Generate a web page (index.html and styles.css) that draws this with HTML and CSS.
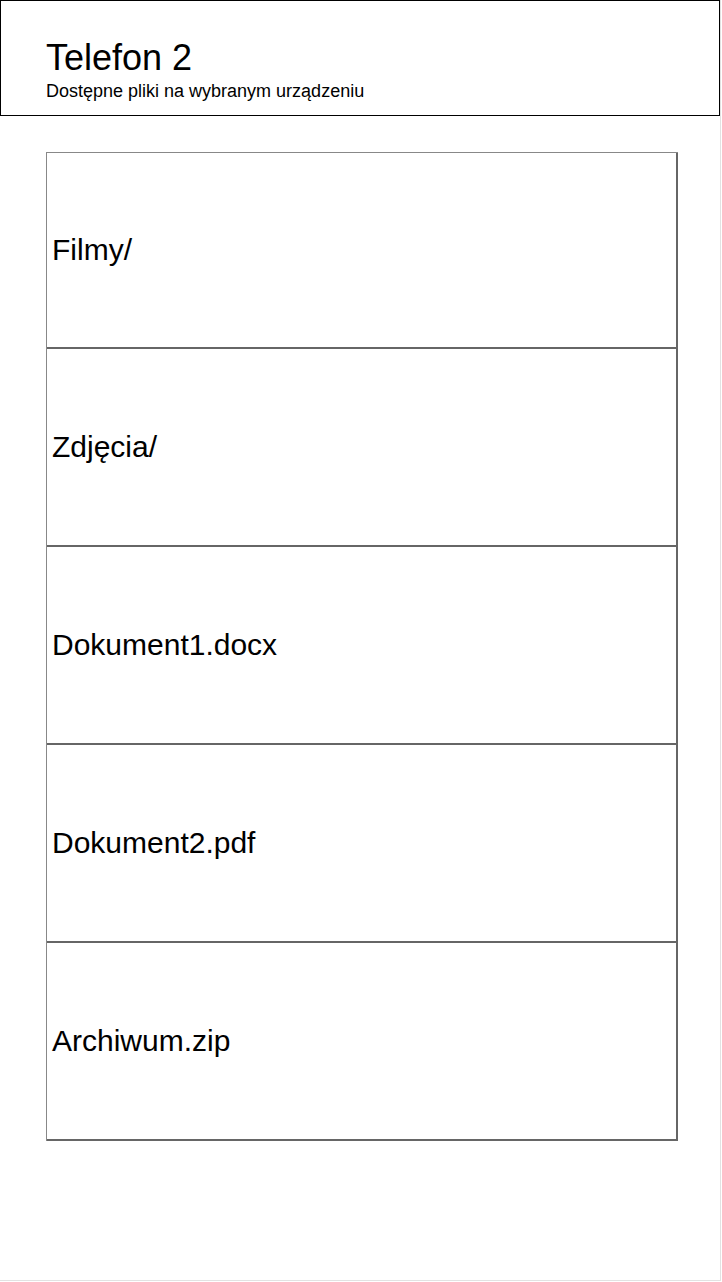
FILE: index.html
```html
<!DOCTYPE html>
<html lang="pl">
<head>
<meta charset="utf-8">
<title>Telefon 2</title>
<link rel="stylesheet" href="styles.css">
</head>
<body>
<div class="page">
  <header class="header">
    <h1 class="title">Telefon 2</h1>
    <p class="subtitle">Dostępne pliki na wybranym urządzeniu</p>
  </header>
  <ul class="files">
    <li class="file">Filmy/</li>
    <li class="file">Zdjęcia/</li>
    <li class="file">Dokument1.docx</li>
    <li class="file">Dokument2.pdf</li>
    <li class="file">Archiwum.zip</li>
  </ul>
</div>
</body>
</html>
```
FILE: styles.css
```css
html, body {
  margin: 0;
  padding: 0;
  background: #fff;
}
body {
  font-family: "Liberation Sans", Arial, sans-serif;
  color: #000;
}
.page {
  width: 720px;
  height: 1280px;
  border-right: 1px solid #e2e2e2;
  border-bottom: 1px solid #e2e2e2;
  box-sizing: content-box;
}
.header {
  border: 1px solid #000;
  height: 76px;
  padding: 38px 0 0 45px;
}
.title {
  margin: 0;
  font-size: 36px;
  font-weight: normal;
  line-height: 38px;
}
.subtitle {
  margin: 3px 0 0;
  font-size: 18px;
  line-height: 22px;
}
.files {
  list-style: none;
  margin: 36px 0 0 46px;
  padding: 0;
  width: 631px;
  border-top: 1px solid #888;
  border-left: 1px solid #888;
}
.file {
  height: 196px;
  border-bottom: 2px solid #666;
  border-right: 2px solid #666;
  display: flex;
  align-items: center;
  padding-left: 5px;
  font-size: 30px;
}
.file:first-child {
  height: 194px;
}
```
